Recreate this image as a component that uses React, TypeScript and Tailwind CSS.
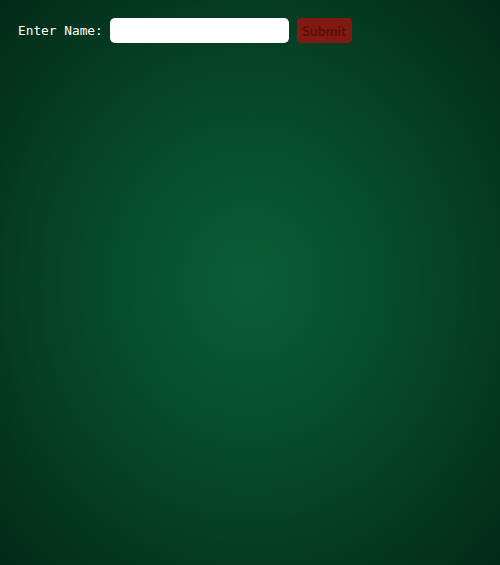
export default function App() {
  return (
    <div className="min-h-[565px] w-full bg-[radial-gradient(ellipse_at_50%_50%,#0a5e37_0%,#06492a_45%,#032a18_100%)]">
      <div className="flex items-center px-[18px] pt-[18px]">
        <label className="mr-[7px] text-[12.8px] text-white font-['DejaVu_Sans_Mono',monospace]">Enter Name:</label>
        <input type="text" className="h-[25px] w-[179px] rounded-[5px] bg-white outline-none" />
        <button className="ml-2 h-[25px] w-[55px] rounded-[4px] bg-[#801a13] text-[14px] font-bold text-[#5e0f0b] font-['Lato',sans-serif]">
          Submit
        </button>
      </div>
    </div>
  );
}
